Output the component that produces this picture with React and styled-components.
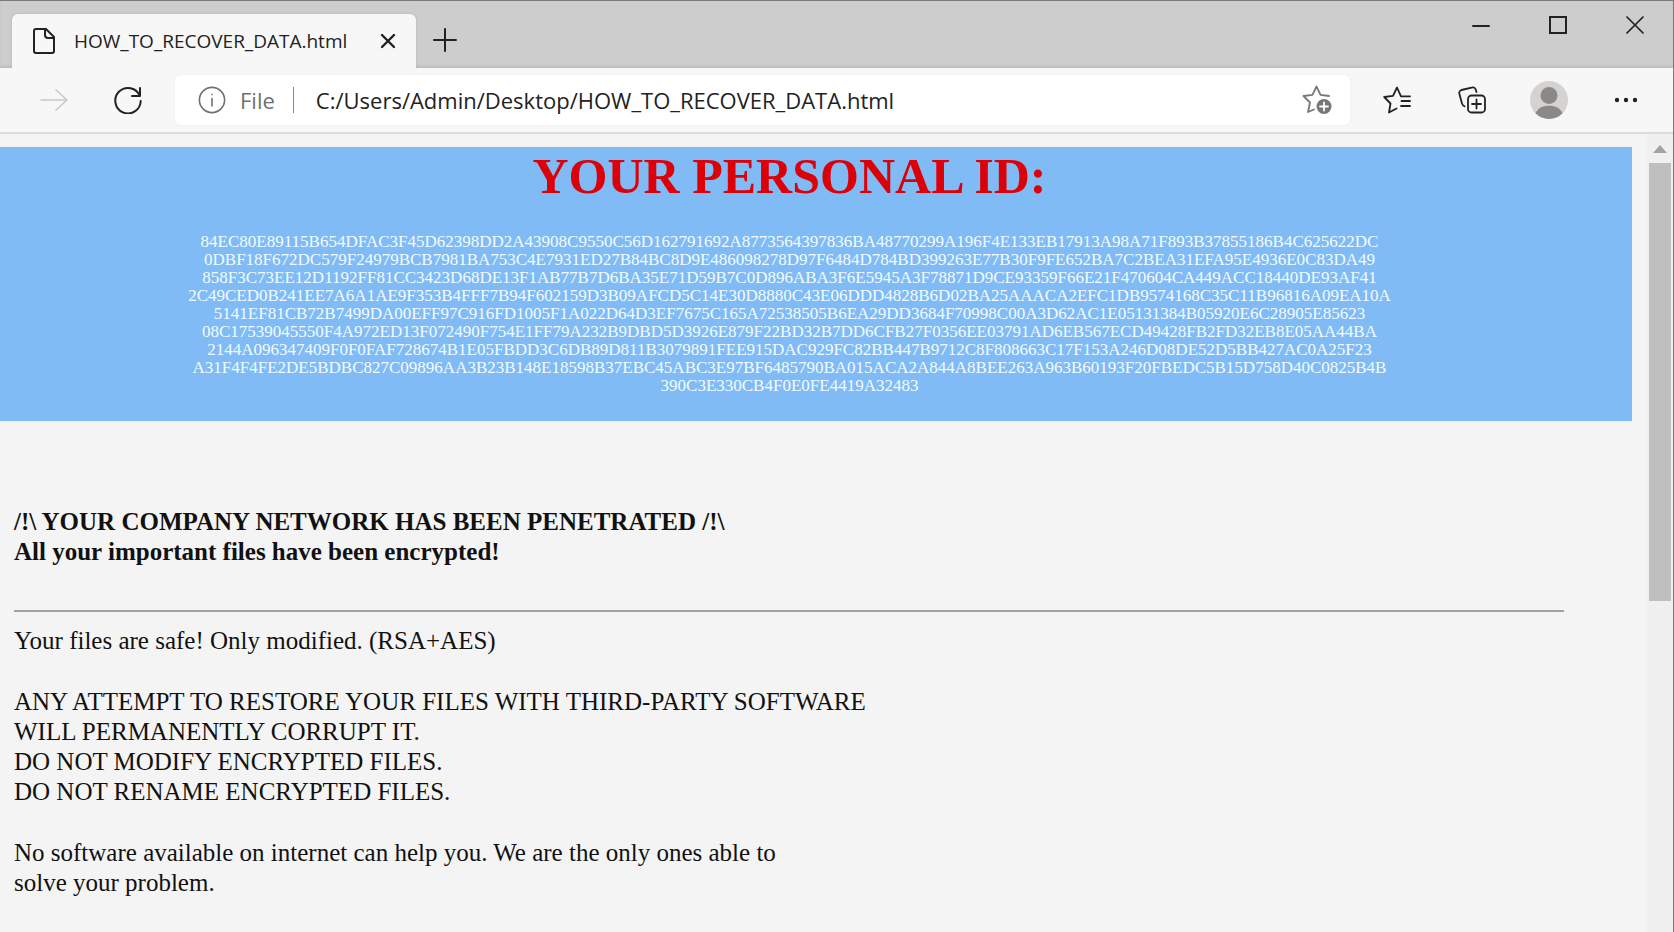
import React from "react"
import styled, { createGlobalStyle } from "styled-components"

const GlobalStyle = createGlobalStyle`
  * {
    box-sizing: border-box;
  }
  body {
    margin: 0;
    background: #f4f4f4;
  }
`

const uiFont = `"Open Sans", "Noto Sans", sans-serif`
const pageFont = `"Liberation Serif", "Times New Roman", serif`

const BrowserWindow = styled.div`
  display: flex;
  flex-direction: column;
  height: 100vh;
  overflow: hidden;
  border-top: 1px solid #7a7a7a;
  border-right: 1px solid #7a7a7a;
  font-family: ${uiFont};
  color: #222;
`

const TitleBar = styled.div`
  display: flex;
  align-items: flex-end;
  flex: none;
  height: 67px;
  padding-left: 12px;
  background: #cdcdcd;
  box-shadow: inset 0 -3px 3px -1px #bdbdbd;
`

const Tab = styled.div`
  display: flex;
  align-items: center;
  flex: 0 1 404px;
  height: 54px;
  padding: 0 12px 0 20px;
  border-radius: 6px 6px 0 0;
  background: #f7f7f7;
  box-shadow: 0 0 3px #b4b4b4;
`

const TabTitle = styled.span`
  flex: 1;
  padding-left: 16px;
  font-size: 19px;
  line-height: 24px;
  white-space: nowrap;
`

const IconButton = styled.button`
  display: flex;
  align-items: center;
  justify-content: center;
  flex: none;
  width: ${props => props.$width}px;
  height: ${props => props.$height}px;
  padding: 0;
  border: 0;
  background: none;
  color: ${props => props.$color || "#222"};
`

const WindowControls = styled.div`
  display: flex;
  align-self: flex-start;
  margin-left: auto;
`

const ToolBar = styled.div`
  display: flex;
  align-items: center;
  flex: none;
  height: 66px;
  padding: 0 9px 0 17px;
  border-bottom: 2px solid #dcdcdc;
  background: #f7f7f7;
`

const AddressBar = styled.form`
  display: flex;
  align-items: center;
  flex: 1;
  height: 50px;
  margin: 0 10px;
  border-radius: 6px;
  background: #fff;
  box-shadow: 0 0 3px #ececec;
  .scheme {
    display: flex;
    align-items: center;
    gap: 14px;
    height: 26px;
    padding: 0 18px 0 23px;
    border: 0;
    border-right: 1px solid #8a8a8a;
    background: none;
    color: #707070;
    font-family: ${uiFont};
    font-size: 22px;
    line-height: 26px;
  }
  input {
    flex: 1;
    min-width: 0;
    padding: 0 0 0 22px;
    border: 0;
    outline: 0;
    background: none;
    color: #222;
    font-family: ${uiFont};
    font-size: 22px;
    line-height: 30px;
  }
`

const Viewport = styled.div`
  display: flex;
  flex: 1;
  min-height: 0;
  background: #f4f4f4;
`

const Page = styled.main`
  flex: 1;
  min-width: 0;
  overflow: hidden;
  padding-top: 13px;
  font-family: ${pageFont};
  color: #111;
`

const Banner = styled.header`
  margin-right: 15px;
  padding: 4px 53px 26px 0;
  background: #80bbf6;
  text-align: center;
  h1 {
    margin: 0 0 32px;
    color: #dc0009;
    font-size: 50px;
    line-height: 50px;
  }
  p {
    margin: 0;
    color: #f2fbff;
    font-size: 17px;
    line-height: 18px;
    white-space: pre-line;
  }
`

const Note = styled.section`
  padding: 86px 83px 0 14px;
  font-size: 25px;
  line-height: 30px;
  h2 {
    margin: 0 0 43px;
    font-size: 25px;
    line-height: 30px;
    white-space: pre-line;
  }
  hr {
    height: 2px;
    margin: 0 0 14px;
    border: 0;
    background: #a2a2a2;
  }
  p {
    margin: 0 0 31px;
  }
`

const ScrollBar = styled.div`
  display: flex;
  flex-direction: column;
  align-items: center;
  flex: none;
  width: 26px;
  background: #f0f0f0;
`

const ScrollTrack = styled.div`
  flex: 1;
  width: 22px;
`

const ScrollThumb = styled.div`
  height: 57%;
  background: #bfbfbf;
`

const Icon = ({ size = 28, stroke = 2, children }) => (
  <svg
    width={size}
    height={size}
    viewBox={`0 0 ${size} ${size}`}
    fill="none"
    stroke="currentColor"
    strokeWidth={stroke}
    strokeLinecap="round"
    strokeLinejoin="round"
    aria-hidden="true"
  >
    {children}
  </svg>
)

const personalId = [
  "84EC80E89115B654DFAC3F45D62398DD2A43908C9550C56D162791692A8773564397836BA48770299A196F4E133EB17913A98A71F893B37855186B4C625622DC",
  "0DBF18F672DC579F24979BCB7981BA753C4E7931ED27B84BC8D9E486098278D97F6484D784BD399263E77B30F9FE652BA7C2BEA31EFA95E4936E0C83DA49",
  "858F3C73EE12D1192FF81CC3423D68DE13F1AB77B7D6BA35E71D59B7C0D896ABA3F6E5945A3F78871D9CE93359F66E21F470604CA449ACC18440DE93AF41",
  "2C49CED0B241EE7A6A1AE9F353B4FFF7B94F602159D3B09AFCD5C14E30D8880C43E06DDD4828B6D02BA25AAACA2EFC1DB9574168C35C11B96816A09EA10A",
  "5141EF81CB72B7499DA00EFF97C916FD1005F1A022D64D3EF7675C165A72538505B6EA29DD3684F70998C00A3D62AC1E05131384B05920E6C28905E85623",
  "08C17539045550F4A972ED13F072490F754E1FF79A232B9DBD5D3926E879F22BD32B7DD6CFB27F0356EE03791AD6EB567ECD49428FB2FD32EB8E05AA44BA",
  "2144A096347409F0F0FAF728674B1E05FBDD3C6DB89D811B3079891FEE915DAC929FC82BB447B9712C8F808663C17F153A246D08DE52D5BB427AC0A25F23",
  "A31F4F4FE2DE5BDBC827C09896AA3B23B148E18598B37EBC45ABC3E97BF6485790BA015ACA2A844A8BEE263A963B60193F20FBEDC5B15D758D40C0825B4B",
  "390C3E330CB4F0E0FE4419A32483",
]

const App = () => {
  return (
    <BrowserWindow>
      <GlobalStyle />
      <TitleBar>
        <Tab>
          <Icon size={26}>
            <path d="M4 1H14L22 9V23Q22 25 20 25H4Q2 25 2 23V3Q2 1 4 1Z" />
            <path d="M13 1V7Q13 10 16 10H22" />
          </Icon>
          <TabTitle>HOW_TO_RECOVER_DATA.html</TabTitle>
          <IconButton $width={32} $height={32} aria-label="Close tab">
            <Icon size={16} stroke={2.4}>
              <path d="M2 2L14 14M14 2L2 14" />
            </Icon>
          </IconButton>
        </Tab>
        <IconButton $width={58} $height={56} aria-label="New tab">
          <Icon size={26}>
            <path d="M13 2V24M2 13H24" />
          </Icon>
        </IconButton>
        <WindowControls>
          <IconButton $width={77} $height={47} aria-label="Minimize">
            <Icon size={18}>
              <path d="M1 10H17" />
            </Icon>
          </IconButton>
          <IconButton $width={77} $height={47} aria-label="Maximize">
            <Icon size={18}>
              <path strokeLinejoin="miter" d="M1 1H17V17H1Z" />
            </Icon>
          </IconButton>
          <IconButton $width={77} $height={47} aria-label="Close">
            <Icon size={18} stroke={1.7}>
              <path d="M1 1L17 17M17 1L1 17" />
            </Icon>
          </IconButton>
        </WindowControls>
      </TitleBar>

      <ToolBar>
        <IconButton $width={74} $height={50} $color="#c9c9c9" aria-label="Forward">
          <Icon stroke={1.6}>
            <path d="M1 14H27M16 4L27 14L16 24" />
          </Icon>
        </IconButton>
        <IconButton $width={74} $height={50} aria-label="Refresh">
          <Icon>
            <path d="M25.8 10A12.7 12.7 0 1 0 26.7 15M26 2V10H18" />
          </Icon>
        </IconButton>
        <AddressBar onSubmit={e => e.preventDefault()}>
          <button className="scheme" type="button">
            <Icon stroke={1.6}>
              <circle cx="14" cy="14" r="12.6" />
              <path d="M14 12.5V20M14 8.4V8.6" />
            </Icon>
            File
          </button>
          <input
            type="text"
            aria-label="Address"
            defaultValue="C:/Users/Admin/Desktop/HOW_TO_RECOVER_DATA.html"
          />
          <IconButton type="button" $width={66} $height={50} $color="#777" aria-label="Add to favorites">
            <Icon size={30} stroke={1.8}>
              <path d="M27 11L18.5 9.8L14.5 1.5L10.5 9.8L1.5 11L8 17.5L6 27L12 24.5" />
              <circle cx="22" cy="21.5" r="7.5" fill="currentColor" stroke="none" />
              <path d="M22 17.5V25.5M18 21.5H26" stroke="#fff" />
            </Icon>
          </IconButton>
        </AddressBar>
        <IconButton $width={74} $height={50} aria-label="Favorites">
          <Icon stroke={1.8}>
            <path d="M27 10.3H18L14 1.5L10 9.8L1.2 11L7.5 17.5L6 26.5L13.5 22.5" />
            <path d="M18.5 15H27M18 20H27" />
          </Icon>
        </IconButton>
        <IconButton $width={76} $height={50} aria-label="Collections">
          <Icon stroke={1.8}>
            <rect x="10" y="9.5" width="17" height="17" rx="3.5" />
            <path d="M18.5 13.5V22.5M14 18H23" />
            <path d="M18.5 6L17.6 3.3Q16.9 1.2 14.7 1.4L3.4 4Q0.8 5 1.3 7.5L4 17.5Q4.7 19.5 6.5 20.3" />
          </Icon>
        </IconButton>
        <IconButton $width={78} $height={50} aria-label="Profile">
          <svg width="38" height="38" viewBox="0 0 38 38" aria-hidden="true">
            <circle cx="19" cy="19" r="19" fill="#d5d3d1" />
            <circle cx="19" cy="14.5" r="8.5" fill="#8b8987" />
            <path d="M5.5 32.3C8 27 12.5 24.7 19 24.7S30 27 32.5 32.3A19 19 0 0 1 5.5 32.3Z" fill="#8b8987" />
          </svg>
        </IconButton>
        <IconButton $width={76} $height={50} aria-label="Settings and more">
          <svg width="24" height="6" viewBox="0 0 24 6" fill="#222" aria-hidden="true">
            <circle cx="3" cy="3" r="2.2" />
            <circle cx="12" cy="3" r="2.2" />
            <circle cx="21" cy="3" r="2.2" />
          </svg>
        </IconButton>
      </ToolBar>

      <Viewport>
        <Page>
          <Banner>
            <h1>YOUR PERSONAL ID:</h1>
            <p>{personalId.join("\n")}</p>
          </Banner>
          <Note>
            <h2>
              {"/!\\ YOUR COMPANY NETWORK HAS BEEN PENETRATED /!\\\nAll your important files have been encrypted!"}
            </h2>
            <hr />
            <p>Your files are safe! Only modified. (RSA+AES)</p>
            <p>
              ANY ATTEMPT TO RESTORE YOUR FILES WITH THIRD-PARTY SOFTWARE
              <br />
              WILL PERMANENTLY CORRUPT IT.
              <br />
              DO NOT MODIFY ENCRYPTED FILES.
              <br />
              DO NOT RENAME ENCRYPTED FILES.
            </p>
            <p>
              No software available on internet can help you. We are the only ones able to
              <br />
              solve your problem.
            </p>
          </Note>
        </Page>
        <ScrollBar>
          <IconButton $width={26} $height={29} aria-label="Scroll up">
            <svg width="14" height="8" viewBox="0 0 14 8" aria-hidden="true">
              <path d="M7 0L14 8H0Z" fill="#a3a3a3" />
            </svg>
          </IconButton>
          <ScrollTrack>
            <ScrollThumb />
          </ScrollTrack>
        </ScrollBar>
      </Viewport>
    </BrowserWindow>
  )
}

export default App
